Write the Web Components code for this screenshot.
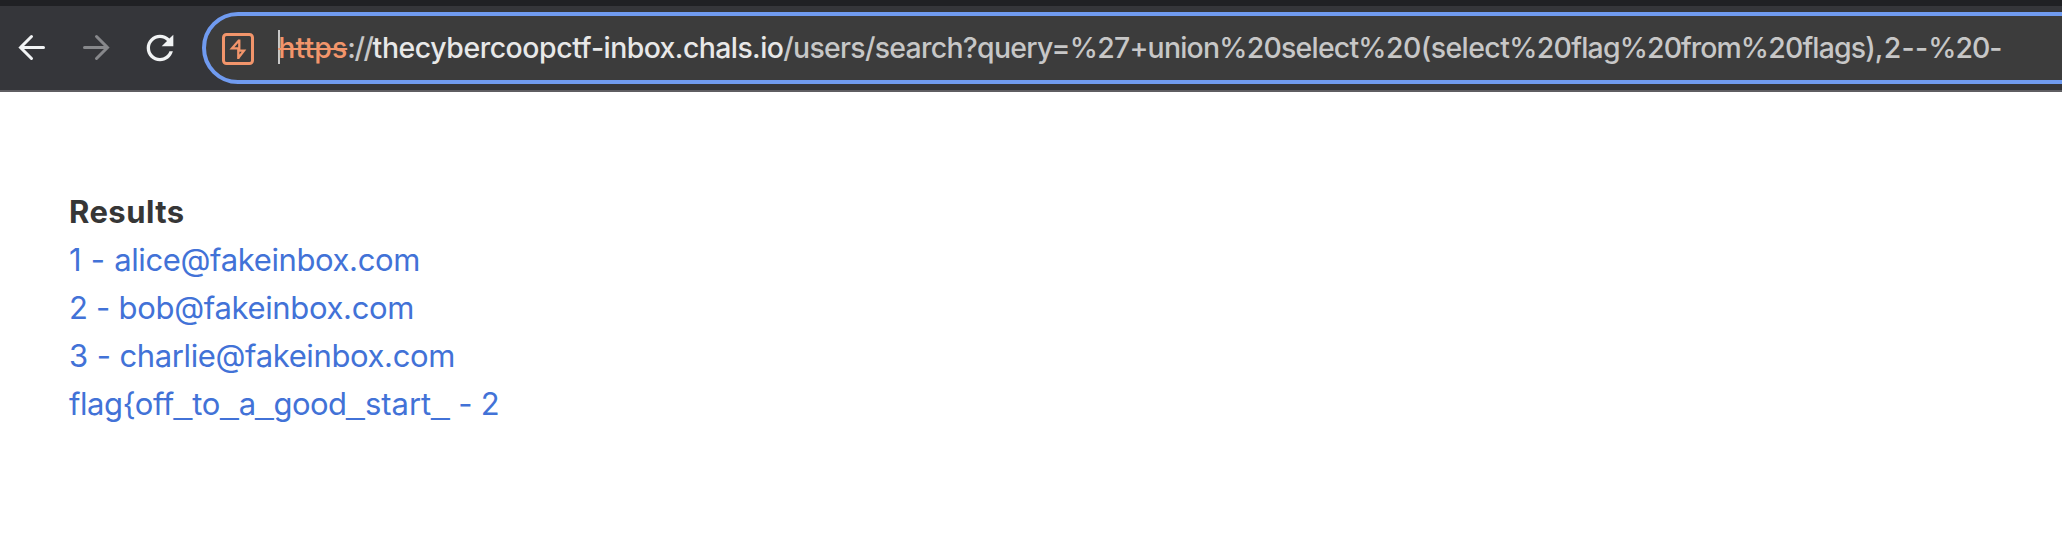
<!DOCTYPE html>
<html lang="en">
<head>
<meta charset="utf-8">
<title>Inbox</title>
<style>
html,body{margin:0;background:#fff}
body{font-family:Inter,"Liberation Sans",sans-serif}
</style>
</head>
<body>
<browser-bar>
<address-bar>
<text-run w="69" class="scheme">https</text-run><text-run w="25.3">://</text-run><text-run w="218.4" class="host">thecybercoopctf</text-run><text-run w="192.3" class="host">-inbox.chals.io</text-run><text-run w="286.5">/users/search?query=</text-run><text-run w="149.5">%27+union</text-run><text-run w="139">%20select</text-run><text-run w="151">%20(select</text-run><text-run w="110.5">%20flag</text-run><text-run w="121">%20from</text-run><text-run w="134">%20flags)</text-run><text-run w="53.5">,2--</text-run><text-run w="73">%20-</text-run>
</address-bar>
</browser-bar>
<search-results>
<text-run slot="title" w="115.6">Results</text-run>
<result-row><text-run w="45.2">1 - </text-run><text-run w="305.8">alice@fakeinbox.com</text-run></result-row>
<result-row><text-run w="49.6">2 - </text-run><text-run w="295.5">bob@fakeinbox.com</text-run></result-row>
<result-row><text-run w="50.4">3 - </text-run><text-run w="335.6">charlie@fakeinbox.com</text-run></result-row>
<result-row><text-run w="104.7">flag{off</text-run><text-run w="18.6" under>_</text-run><text-run w="27.8">to</text-run><text-run w="18.6" under>_</text-run><text-run w="16.5">a</text-run><text-run w="18.3" under>_</text-run><text-run w="72.7">good</text-run><text-run w="18.6" under>_</text-run><text-run w="66.4">start</text-run><text-run w="18.6" under>_</text-run><text-run w="49.4"> - 2</text-run></result-row>
</search-results>
<script>
const ctx = document.createElement('canvas').getContext('2d');

/* A run of text tracked to occupy a given advance width. */
class TextRun extends HTMLElement {
  connectedCallback() {
    this.attachShadow({mode:'open'}).innerHTML = `<style>
      :host{display:inline;white-space:pre;font-kerning:normal}
      :host([under]){font-family:"Liberation Sans",sans-serif;font-size:33px;line-height:1;vertical-align:2px}
    </style><slot></slot>`;
    const cs = getComputedStyle(this), t = this.textContent;
    ctx.font = `${cs.fontWeight} ${cs.fontSize} ${cs.fontFamily}`;
    const natural = ctx.measureText(t).width;
    this.style.letterSpacing = ((+this.getAttribute('w') - natural) / t.length).toFixed(3) + 'px';
  }
}

class AddressBar extends HTMLElement {
  constructor() {
    super();
    this.attachShadow({mode:'open'}).innerHTML = `<style>
      :host{display:flex;align-items:center;box-sizing:border-box;flex:none;width:1920px;height:72px;
        border:4px solid #709bf0;border-radius:36px;background:#3c3c3c;color:#c7c7c7;
        padding-left:16px;font-size:28.4px;font-weight:450}
      svg{flex:none;width:32px;height:32px;margin-top:1px}
      .caret{flex:none;width:2px;height:34px;background:#c8c8c8;margin:-2px -2px 0 24px}
      .url{display:flex;white-space:pre;line-height:34px;padding-left:.3px}
      ::slotted(.scheme){color:#f2956b;text-decoration:line-through;text-decoration-thickness:2px}
      ::slotted(.host){color:#e8e8e8}
    </style>
    <svg viewBox="0 0 32 32" fill="none" stroke="#f2956b"><rect x="1.5" y="1.5" width="29" height="29" rx="3" stroke-width="3"/><path d="M17.300 7L10 15.300H17.300M17.300 6.500V17.700H22L16.300 25M16.300 15.300V26" stroke-width="2.3"/></svg>
    <span class="caret"></span><div class="url"><slot></slot></div>`;
  }
}

class BrowserBar extends HTMLElement {
  constructor() {
    super();
    this.attachShadow({mode:'open'}).innerHTML = `<style>
      :host{display:flex;align-items:center;box-sizing:border-box;height:92px;overflow:hidden;
        border-top:6px solid #202124;border-bottom:2px solid #5f5e62;background:#35363a;padding-left:12px}
      svg{flex:none;width:40px;height:40px;margin-right:24px}
      svg:last-of-type{margin-right:22px}
    </style>
    <svg viewBox="0 0 40 40" fill="none" stroke="#f1f3f4" stroke-width="3" stroke-linecap="round"><path d="M31.500 19.500H8.500M19.500 8.500L8.500 19.500L19.500 30.500"/></svg>
    <svg viewBox="0 0 40 40" fill="none" stroke="#87888b" stroke-width="3" stroke-linecap="round"><path d="M8.500 19.500H31.500M20.500 8.500L31.500 19.500L20.500 30.500"/></svg>
    <svg viewBox="0 0 24 24" fill="#f1f3f4"><path d="M17.650 6.350C16.200 4.900 14.210 4 12 4c-4.420 0-7.990 3.580-7.990 8s3.570 8 7.990 8c3.730 0 6.840-2.550 7.730-6h-2.080c-.820 2.330-3.040 4-5.650 4-3.310 0-6-2.690-6-6s2.690-6 6-6c1.660 0 3.140.690 4.220 1.780L13 11h7V4l-2.350 2.350z"/></svg>
    <slot></slot>`;
  }
}

class SearchResults extends HTMLElement {
  constructor() {
    super();
    this.attachShadow({mode:'open'}).innerHTML = `<style>
      :host{display:block;padding:96px 69px 0;font-size:31px;line-height:48px}
      .title{height:48px;font-weight:700;color:#363636}
    </style><div class="title"><slot name="title"></slot></div><slot></slot>`;
  }
}

class ResultRow extends HTMLElement {
  constructor() {
    super();
    this.attachShadow({mode:'open'}).innerHTML = `<style>
      :host{display:block;height:48px;white-space:pre;color:#4272d7}
    </style><slot></slot>`;
  }
}

customElements.define('browser-bar', BrowserBar);
customElements.define('address-bar', AddressBar);
customElements.define('search-results', SearchResults);
customElements.define('result-row', ResultRow);
customElements.define('text-run', TextRun);
</script>
</body>
</html>
